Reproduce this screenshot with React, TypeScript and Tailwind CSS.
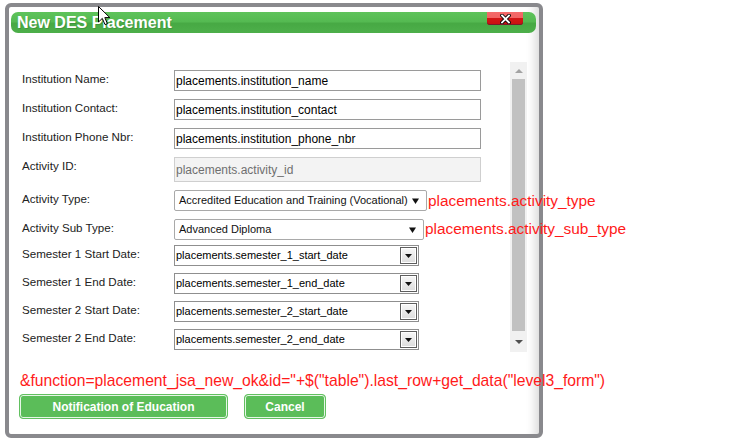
import React from 'react';

const labelCls = 'w-[152px] shrink-0 text-[11.6px] leading-normal text-[#222]';
const redCls = 'relative z-10 whitespace-nowrap text-[15.4px] leading-normal text-[#ff1a1a]';

const TextField = ({ value }: { value: string }) => (
  <div className="flex h-[21px] w-[307px] shrink-0 items-center border border-[#9a9a9a] bg-white pl-px text-[12px] text-black">
    {value}
  </div>
);

const SelectArrow = () => (
  <svg width="7" height="6" viewBox="0 0 7 6">
    <path d="M0 0.5 L7 0.5 L3.5 6 Z" fill="#111" />
  </svg>
);

const SelectField = ({ value, width }: { value: string; width: string }) => (
  <div
    className={`flex h-[21px] ${width} shrink-0 items-center justify-between rounded-[2px] border border-[#a9a9a9] bg-white pl-[4px] pr-[7px] text-[11px] text-[#111]`}
  >
    <span className="whitespace-nowrap">{value}</span>
    <SelectArrow />
  </div>
);

const DateField = ({ value }: { value: string }) => (
  <div className="flex h-[21px] w-[245px] shrink-0 items-center justify-between border border-[#8f8f8f] bg-white pl-px pr-px text-[11px] text-black">
    <span className="whitespace-nowrap">{value}</span>
    <div className="flex h-[17px] w-[17px] items-center justify-center border border-[#5e5e5e] bg-[linear-gradient(#f7f7f7,#dcdcdc)] shadow-[inset_0_0_0_1px_#fff]">
      <svg width="7" height="4" viewBox="0 0 7 4">
        <path d="M0 0 L7 0 L3.5 4 Z" fill="#111" />
      </svg>
    </div>
  </div>
);

const Scrollbar = () => (
  <div className="flex h-full w-[17px] shrink-0 flex-col items-center bg-[#f1f1f1]">
    <div className="flex h-[17px] w-full items-center justify-center">
      <svg width="8" height="4" viewBox="0 0 8 4">
        <path d="M0 4 L8 4 L4 0 Z" fill="#a3a3a3" />
      </svg>
    </div>
    <div className="h-[252px] w-[13px] bg-[#c1c1c1]" />
    <div className="flex w-full flex-1 items-center justify-center">
      <svg width="8" height="4" viewBox="0 0 8 4">
        <path d="M0 0 L8 0 L4 4 Z" fill="#505050" />
      </svg>
    </div>
  </div>
);

const Cursor = () => (
  <svg className="absolute left-[98px] top-[6px] z-20" width="13" height="20" viewBox="0 0 13 20">
    <path
      d="M0.5 0.5 L0.5 16 L4.3 12.4 L7 18.6 L9.4 17.6 L6.8 11.6 L11.8 11.6 Z"
      fill="#fff"
      stroke="#000"
      strokeWidth="1"
      strokeLinejoin="round"
    />
  </svg>
);

export default function App() {
  return (
    <div className="relative h-[440px] w-[742px] overflow-hidden bg-white font-['Liberation_Sans',Arial,sans-serif]">
      <Cursor />

      <div className="absolute left-[5px] top-[3px] flex h-[435px] w-[538px] flex-col rounded-[6px] border-4 border-[#89898d] bg-white shadow-[inset_-12px_0_10px_-8px_rgba(0,0,0,0.15)]">
        {/* title bar */}
        <div className="ml-[2px] mr-[3px] mt-[5px] flex h-[21px] items-start justify-between rounded-[7px] bg-[linear-gradient(#5ec35b,#55ba52_45%,#47a944_55%,#4daf4a)]">
          <span className="pl-[6px] pt-px text-[16px] font-bold leading-[19px] text-white [text-shadow:1px_1px_0_rgba(0,0,0,0.15)]">
            New DES Placement
          </span>
          <div className="mr-[13px] flex h-[13px] w-[36px] items-center justify-center rounded-b-[3px] bg-[linear-gradient(#f46a6a_0,#f06262_50%,#d21616_50%,#c81010)] shadow-[inset_0_-1px_0_#7a1a2a]">
            <svg width="11" height="10" viewBox="0 0 11 10">
              <path d="M2 1.5 L9 8.5 M9 1.5 L2 8.5" stroke="#000" strokeWidth="3.6" strokeLinecap="square" />
              <path d="M2 1.5 L9 8.5 M9 1.5 L2 8.5" stroke="#fff" strokeWidth="1.8" strokeLinecap="square" />
            </svg>
          </div>
        </div>

        {/* form area */}
        <div className="mt-[29px] flex h-[290px] pl-[13px]">
          <div className="flex w-[488px] shrink-0 flex-col pt-[8px]">
            <div className="flex h-[29px] items-start">
              <span className={labelCls}>Institution Name:</span>
              <TextField value="placements.institution_name" />
            </div>
            <div className="flex h-[29px] items-start">
              <span className={labelCls}>Institution Contact:</span>
              <TextField value="placements.institution_contact" />
            </div>
            <div className="flex h-[29px] items-start">
              <span className={labelCls}>Institution Phone Nbr:</span>
              <TextField value="placements.institution_phone_nbr" />
            </div>
            <div className="flex h-[33px] items-start">
              <span className={labelCls}>Activity ID:</span>
              <div className="flex h-[25px] w-[307px] shrink-0 items-center border border-[#cfcfcf] bg-[#f3f3f3] pl-px text-[12px] text-[#6f6f6f]">
                placements.activity_id
              </div>
            </div>
            <div className="flex h-[29px] items-start">
              <span className={labelCls}>Activity Type:</span>
              <SelectField value="Accredited Education and Training (Vocational)" width="w-[253px]" />
              <span className={`${redCls} -mt-px ml-px`}>placements.activity_type</span>
            </div>
            <div className="flex h-[26px] items-start">
              <span className={labelCls}>Activity Sub Type:</span>
              <SelectField value="Advanced Diploma" width="w-[250px]" />
              <span className={`${redCls} -mt-[2px] ml-[1px]`}>placements.activity_sub_type</span>
            </div>
            <div className="flex h-[28px] items-start">
              <span className={labelCls}>Semester 1 Start Date:</span>
              <DateField value="placements.semester_1_start_date" />
            </div>
            <div className="flex h-[28px] items-start">
              <span className={labelCls}>Semester 1 End Date:</span>
              <DateField value="placements.semester_1_end_date" />
            </div>
            <div className="flex h-[28px] items-start">
              <span className={labelCls}>Semester 2 Start Date:</span>
              <DateField value="placements.semester_2_start_date" />
            </div>
            <div className="flex h-[21px] items-start">
              <span className={labelCls}>Semester 2 End Date:</span>
              <DateField value="placements.semester_2_end_date" />
            </div>
          </div>
          <Scrollbar />
        </div>

        {/* debug line */}
        <div className="relative z-10 mt-[20px] whitespace-nowrap pl-[11px] text-[15.7px] leading-[18px] text-[#ff1a1a]">
          &amp;function=placement_jsa_new_ok&amp;id="+$("table").last_row+get_data("level3_form")
        </div>

        {/* buttons */}
        <div className="mt-[4px] flex pl-[10px]">
          <button className="flex h-[25px] w-[209px] items-center justify-center rounded-[4px] border border-[#62c060] bg-[#5bbd59] text-[12px] font-bold text-white shadow-[inset_0_0_0_1px_#e6f6e6]">
            Notification of Education
          </button>
          <button className="ml-[16px] flex h-[25px] w-[82px] items-center justify-center rounded-[4px] border border-[#62c060] bg-[#5bbd59] text-[12px] font-bold text-white shadow-[inset_0_0_0_1px_#e6f6e6]">
            Cancel
          </button>
        </div>
      </div>
    </div>
  );
}
